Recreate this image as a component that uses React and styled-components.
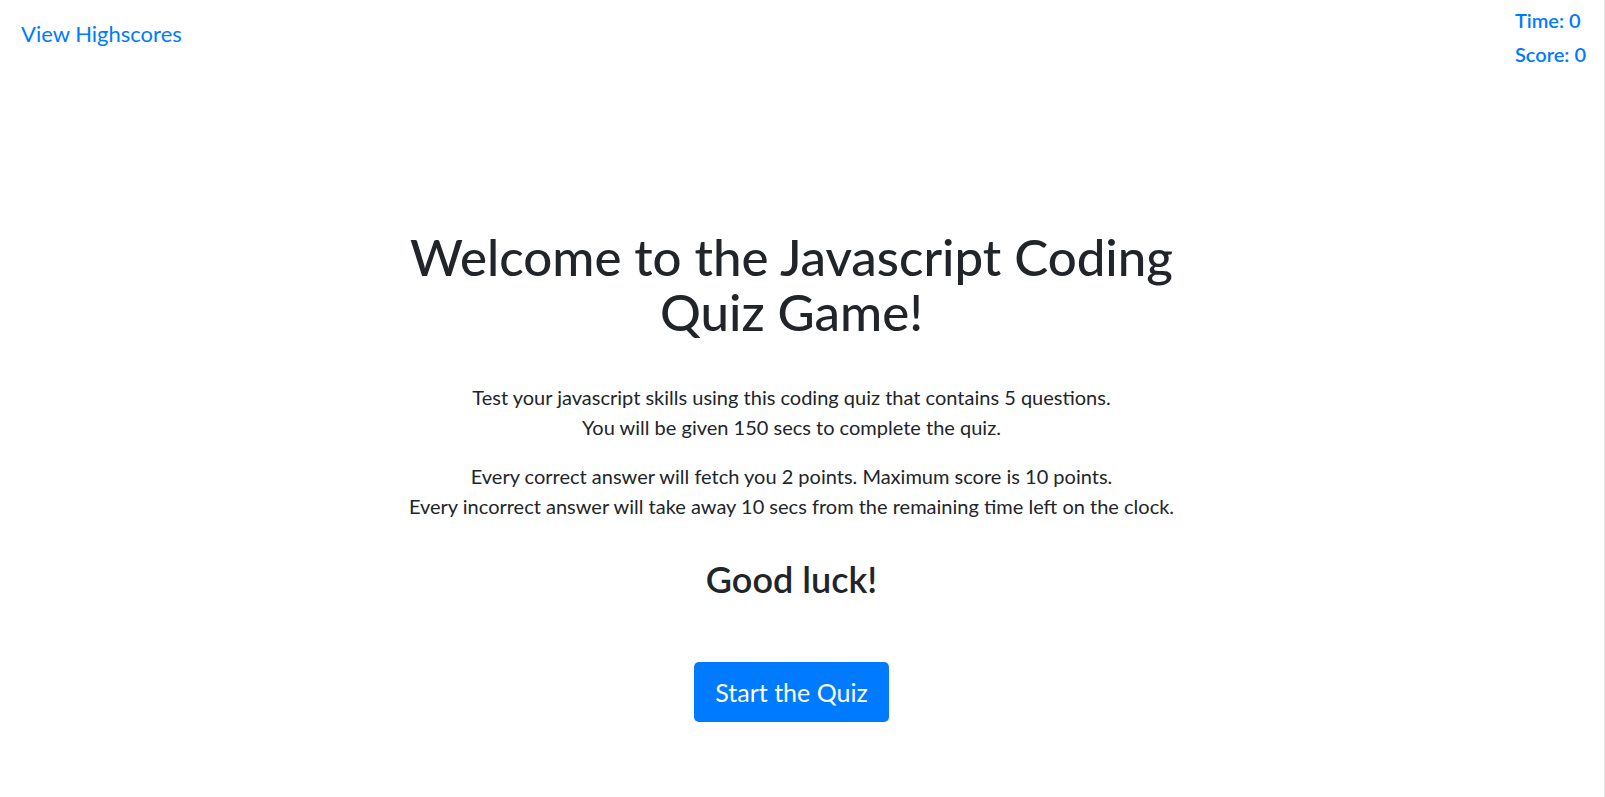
import React from 'react';
import styled, { createGlobalStyle } from 'styled-components';

const GlobalStyle = createGlobalStyle`
  html, body {
    margin: 0;
    padding: 0;
    background: #fff;
  }
  body {
    font-family: Lato, "Noto Sans", "Liberation Sans", sans-serif;
    color: #212529;
  }
  * {
    box-sizing: border-box;
  }
`;

const Page = styled.div`
  min-height: 797px;
  width: 100%;
  border-right: 1px solid #e6e6e6;
  display: flex;
  flex-direction: column;
`;

const Header = styled.header`
  display: flex;
  justify-content: space-between;
  align-items: flex-start;
  padding: 3px 18px 0 21px;
`;

const HighscoresLink = styled.a`
  color: #007bff;
  font-size: 22px;
  line-height: 33px;
  margin-top: 14px;
  text-decoration: none;
  cursor: pointer;
`;

const Stats = styled.div`
  display: flex;
  flex-direction: column;
  align-items: flex-start;
`;

const Stat = styled.div`
  color: #007bff;
  font-size: 20px;
  font-weight: 600;
  line-height: 34px;
`;

const Main = styled.main`
  display: flex;
  flex-direction: column;
  align-items: center;
  text-align: center;
  padding: 158px 21px 0 0;
`;

const Title = styled.h1`
  max-width: 840px;
  margin: 0 0 43px;
  font-size: 51px;
  font-weight: 500;
  line-height: 55px;
`;

const Paragraph = styled.p`
  margin: 0 0 19px;
  font-size: 20px;
  line-height: 30px;
`;

const Luck = styled.h2`
  margin: 18px 0 61px;
  font-size: 36px;
  font-weight: 600;
  line-height: 1.2;
`;

const StartButton = styled.button`
  border: none;
  border-radius: 5px;
  background: #007bff;
  color: #fff;
  font-family: inherit;
  font-size: 25px;
  line-height: 36px;
  padding: 12px 21px;
  cursor: pointer;
`;

const App = () => {
  return (
    <>
      <GlobalStyle />
      <Page>
        <Header>
          <HighscoresLink>View Highscores</HighscoresLink>
          <Stats>
            <Stat>Time: 0</Stat>
            <Stat>Score: 0</Stat>
          </Stats>
        </Header>
        <Main>
          <Title>Welcome to the Javascript Coding Quiz Game!</Title>
          <Paragraph>
            Test your javascript skills using this coding quiz that contains 5 questions.
            <br />
            You will be given 150 secs to complete the quiz.
          </Paragraph>
          <Paragraph>
            Every correct answer will fetch you 2 points. Maximum score is 10 points.
            <br />
            Every incorrect answer will take away 10 secs from the remaining time left on the clock.
          </Paragraph>
          <Luck>Good luck!</Luck>
          <StartButton>Start the Quiz</StartButton>
        </Main>
      </Page>
    </>
  );
};

export default App;
